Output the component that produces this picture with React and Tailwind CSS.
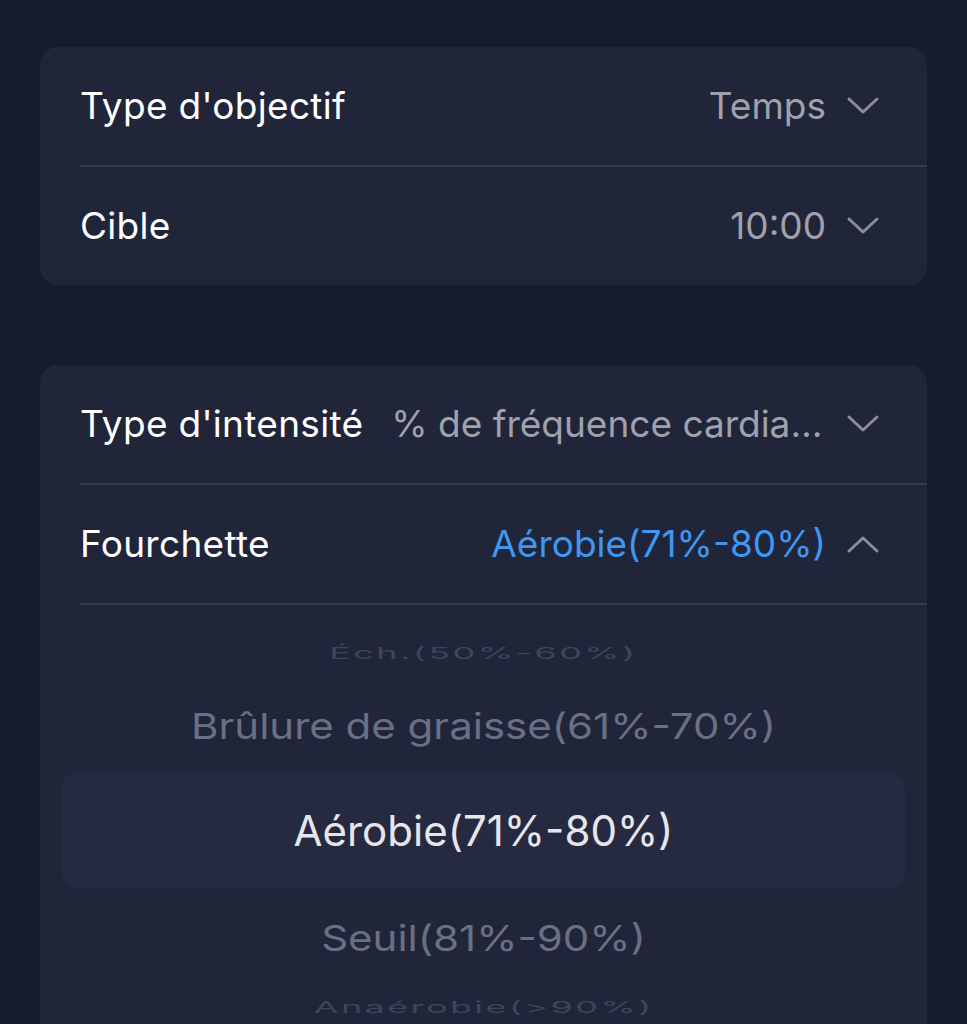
import React from 'react';

const Chevron = ({ up = false }) => (
    <svg width="34" height="20" viewBox="0 0 34 20" className="shrink-0">
        <path
            d={up ? 'M3 17 L17 4 L31 17' : 'M3 3 L17 16 L31 3'}
            fill="none"
            stroke="#8a8d99"
            strokeWidth="3"
            strokeLinecap="round"
            strokeLinejoin="round"
        />
    </svg>
);

const Row = ({ label, value, valueClass = 'text-[#9fa1ab]', up = false, divider = false }) => (
    <div>
        <div className="h-[118px] flex items-center pl-10 pr-[47px] gap-7">
            <span className="text-white text-[37px] tracking-[0.3px] whitespace-nowrap shrink-0">{label}</span>
            <div className="flex-1 min-w-0 flex items-center justify-end gap-5">
                <span className={`truncate text-[37px] ${valueClass}`}>{value}</span>
                <Chevron up={up} />
            </div>
        </div>
        {divider && <div className="ml-10 h-[2px] bg-[#353a4f]"></div>}
    </div>
);

export default function App() {
    return (
        <div
            className="min-h-[1024px] bg-[#171b2f] px-10 pt-[47px] overflow-hidden"
            style={{ fontFamily: "Inter, Roboto, 'Noto Sans', sans-serif" }}
        >
            <div className="bg-[#21253a] rounded-[18px]">
                <Row label="Type d'objectif" value="Temps" divider />
                <Row label="Cible" value="10:00" />
            </div>

            <div className="mt-[80px] bg-[#21253a] rounded-t-[18px] h-[700px]">
                <Row label="Type d'intensité" value="% de fréquence cardiaque maximale" divider />
                <Row label="Fourchette" value="Aérobie(71%-80%)" valueClass="text-[#3e97f1]" up divider />

                <div className="pt-[12px] flex flex-col items-center">
                    <div className="h-[72px] flex items-center">
                        <span className="text-[#40445a] text-[30px] tracking-[2px] scale-y-[0.55] scale-x-[1.2] inline-block">
                            Éch.(50%-60%)
                        </span>
                    </div>
                    <div className="h-[72px] flex items-center">
                        <span className="text-[#6b6f83] text-[42px] scale-y-[0.85] inline-block">
                            Brûlure de graisse(61%-70%)
                        </span>
                    </div>
                </div>
                <div className="mx-[22px] mt-[11px] h-[117px] rounded-[16px] bg-[#262a40] flex items-center justify-center">
                    <span className="text-[#e6e6ea] text-[42px]">Aérobie(71%-80%)</span>
                </div>
                <div className="pt-3 flex flex-col items-center">
                    <div className="h-[72px] flex items-center">
                        <span className="text-[#6b6f83] text-[42px] scale-y-[0.85] inline-block">
                            Seuil(81%-90%)
                        </span>
                    </div>
                    <div className="h-[68px] flex items-center">
                        <span className="text-[#40445a] text-[30px] tracking-[2px] scale-y-[0.55] scale-x-[1.2] inline-block">
                            Anaérobie(&gt;90%)
                        </span>
                    </div>
                </div>
            </div>
        </div>
    );
}
